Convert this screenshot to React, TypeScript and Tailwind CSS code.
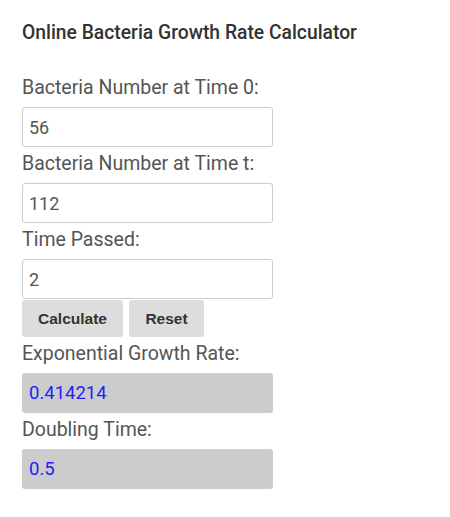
import React, { useState } from 'react';

const font = { fontFamily: 'Roboto, "Liberation Sans", sans-serif' };

const Label: React.FC<{ text: string }> = ({ text }) => (
  <div className="h-[36px] text-[19.5px] leading-[34px] text-[#555]">{text}</div>
);

const App: React.FC = () => {
  const [n0, setN0] = useState('56');
  const [nt, setNt] = useState('112');
  const [t, setT] = useState('2');

  return (
    <div className="min-h-[517px] bg-white pl-[22px] pt-[21px]" style={font}>
      <h1 className="text-[19.3px] leading-[24px] font-medium text-[#333] mb-[26px]">
        Online Bacteria Growth Rate Calculator
      </h1>

      <div className="w-[251px]">
        <Label text="Bacteria Number at Time 0:" />
        <input
          value={n0}
          onChange={(e) => setN0(e.target.value)}
          className="w-full h-[40px] px-[6px] border border-[#ccc] rounded-[3px] text-[18px] text-[#555] outline-none"
        />
        <Label text="Bacteria Number at Time t:" />
        <input
          value={nt}
          onChange={(e) => setNt(e.target.value)}
          className="w-full h-[40px] px-[6px] border border-[#ccc] rounded-[3px] text-[18px] text-[#555] outline-none"
        />
        <Label text="Time Passed:" />
        <input
          value={t}
          onChange={(e) => setT(e.target.value)}
          className="w-full h-[40px] px-[6px] border border-[#ccc] rounded-[3px] text-[18px] text-[#555] outline-none"
        />

        {/* Buttons */}
        <div className="flex gap-[6px] mt-[1px] h-[37px]">
          <button
            className="w-[101px] h-full bg-[#ddd] rounded-[3px] text-[15.5px] font-bold text-[#333]"
            style={{ fontFamily: '"Liberation Sans", Arial, sans-serif' }}
          >
            Calculate
          </button>
          <button
            className="w-[75px] h-full bg-[#ddd] rounded-[3px] text-[15.5px] font-bold text-[#333]"
            style={{ fontFamily: '"Liberation Sans", Arial, sans-serif' }}
          >
            Reset
          </button>
        </div>

        <Label text="Exponential Growth Rate:" />
        <div className="h-[40px] px-[7px] bg-[#ccc] rounded-[3px] text-[18.5px] leading-[40px] text-[#2020ff]">
          0.414214
        </div>
        <Label text="Doubling Time:" />
        <div className="h-[40px] px-[7px] bg-[#ccc] rounded-[3px] text-[18.5px] leading-[40px] text-[#2020ff]">
          0.5
        </div>
      </div>
    </div>
  );
};

export default App;
